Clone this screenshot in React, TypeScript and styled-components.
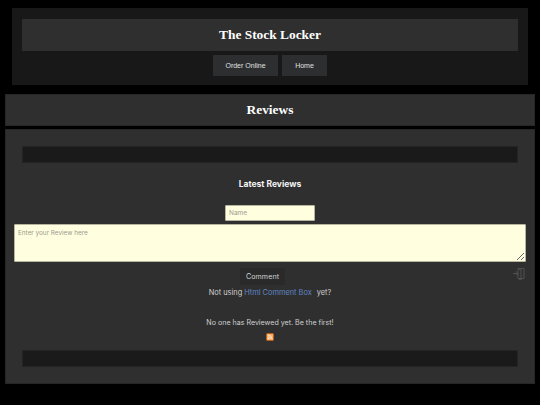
import styled, { createGlobalStyle } from "styled-components";

const GlobalStyle = createGlobalStyle`
  html, body {
    margin: 0;
    padding: 0;
    background-color: #000000;
  }
`;

const Page = styled.div`
  width: 540px;
  height: 405px;
  padding-top: 8px;
  box-sizing: border-box;
  overflow: hidden;
`;

const Header = styled.header`
  box-sizing: border-box;
  margin: 0 12px;
  height: 77px;
  padding: 11px 10px 0;
  background-color: #181818;
`;

const TitleBar = styled.div`
  height: 32px;
  display: flex;
  align-items: center;
  justify-content: center;
  background-color: #2f2f2f;
`;

const Title = styled.h1`
  margin: 0;
  color: #ffffff;
  font-family: "Liberation Serif", serif;
  font-size: 13.4px;
  font-weight: bold;
`;

const Nav = styled.nav`
  display: flex;
  justify-content: center;
  gap: 4px;
  margin-top: 4px;
`;

const NavLink = styled.a`
  height: 21px;
  display: flex;
  align-items: center;
  justify-content: center;
  width: ${(props: { $width: number }) => props.$width}px;
  background-color: #2c2e30;
  color: #e0e0e0;
  font-family: "Liberation Sans", sans-serif;
  font-size: 7px;
`;

const ReviewsBar = styled.div`
  box-sizing: border-box;
  margin: 9px 5px 0;
  height: 32px;
  display: flex;
  align-items: center;
  justify-content: center;
  background-color: #2f2f2f;
  border: 1px solid #262626;
`;

const ReviewsTitle = styled.h2`
  margin: 0;
  color: #ffffff;
  font-family: "Liberation Serif", serif;
  font-size: 13.4px;
  font-weight: bold;
`;

const Main = styled.main`
  box-sizing: border-box;
  position: relative;
  margin: 3px 5px 0;
  height: 255px;
  padding-top: 16px;
  background-color: #2f2f2f;
  border: 1px solid #262626;
  display: flex;
  flex-direction: column;
  align-items: center;
  font-family: Inter, "Open Sans", sans-serif;
`;

const DarkBar = styled.div`
  flex: none;
  box-sizing: border-box;
  width: 496px;
  height: 17px;
  background-color: #1a1a1a;
  border: 1px solid #242424;
`;

const Heading = styled.h3`
  margin: 15px 0 0;
  height: 12px;
  line-height: 12px;
  color: #f4f4f4;
  font-size: 8.5px;
  font-weight: 700;
`;

const NameInput = styled.input`
  box-sizing: border-box;
  display: block;
  margin-top: 15px;
  width: 90px;
  height: 16px;
  padding: 0 3px;
  border: 1px solid #b5b5a0;
  border-radius: 1px;
  background-color: #ffffe0;
  font-family: inherit;
  font-size: 6.5px;
  &::placeholder {
    color: #9a9a8c;
  }
`;

const ReviewInput = styled.textarea`
  box-sizing: border-box;
  display: block;
  flex: none;
  margin-top: 3px;
  width: 512px;
  height: 38px;
  padding: 4px 3px;
  border: 1px solid #b5b5a0;
  border-radius: 1px;
  background-color: #ffffe0;
  font-family: inherit;
  font-size: 6.4px;
  outline: none;
  &::placeholder {
    color: #9a9a8c;
  }
`;

const CommentButton = styled.button`
  margin: 6px 15px 0 0;
  width: 45px;
  height: 17px;
  padding: 0;
  border: none;
  border-radius: 2px;
  background-color: #2a2a2a;
  color: #d2d2d2;
  font-family: inherit;
  font-size: 7.1px;
  letter-spacing: 0.1px;
`;

const LoginIcon = styled.svg`
  position: absolute;
  left: 506px;
  top: 137px;
  width: 13px;
  height: 13px;
  fill: none;
  stroke: #505050;
  stroke-width: 1;
`;

const Note = styled.p`
  margin: 2px 0 0;
  height: 12px;
  line-height: 12px;
  color: #cfcfcf;
  font-size: 7.4px;
`;

const CommentBoxLink = styled.a`
  color: #5f86c4;
  margin: 0 3px 0 0;
`;

const EmptyNote = styled.p`
  margin: 18px 0 0;
  height: 12px;
  line-height: 12px;
  color: #cfcfcf;
  font-size: 7.1px;
`;

const RssIcon = styled.svg`
  flex: none;
  display: block;
  margin-top: 4px;
  width: 8px;
  height: 8px;
`;

const BottomBar = styled(DarkBar)`
  margin-top: 9px;
`;

export default function App() {
  return (
    <>
      <GlobalStyle />
      <Page>
        <Header>
          <TitleBar>
            <Title>The Stock Locker</Title>
          </TitleBar>
          <Nav>
            <NavLink $width={65}>Order Online</NavLink>
            <NavLink $width={45}>Home</NavLink>
          </Nav>
        </Header>
        <ReviewsBar>
          <ReviewsTitle>Reviews</ReviewsTitle>
        </ReviewsBar>
        <Main>
          <DarkBar />
          <Heading>Latest Reviews</Heading>
          <NameInput placeholder="Name" />
          <ReviewInput placeholder="Enter your Review here" />
          <CommentButton>Comment</CommentButton>
          <LoginIcon viewBox="0 0 13 13">
            <path d="M6 1.5h6v10H6zM6 1.5l3 1.5v10L6 11.5M1 6.5h5M4 4.5l2 2-2 2" />
          </LoginIcon>
          <Note>
            Not using <CommentBoxLink>Html Comment Box</CommentBoxLink> yet?
          </Note>
          <EmptyNote>No one has Reviewed yet. Be the first!</EmptyNote>
          <RssIcon viewBox="0 0 8 8">
            <rect x="0.5" y="0.5" width="7" height="7" rx="1" fill="#f6ab66" stroke="#b8641f" />
            <circle cx="2.5" cy="5.5" r="0.7" fill="#fff3e4" />
            <path d="M2 3.6a2.4 2.4 0 0 1 2.4 2.4M2 2a4 4 0 0 1 4 4" fill="none" stroke="#fff3e4" strokeWidth="0.7" />
          </RssIcon>
          <BottomBar />
        </Main>
      </Page>
    </>
  );
}
